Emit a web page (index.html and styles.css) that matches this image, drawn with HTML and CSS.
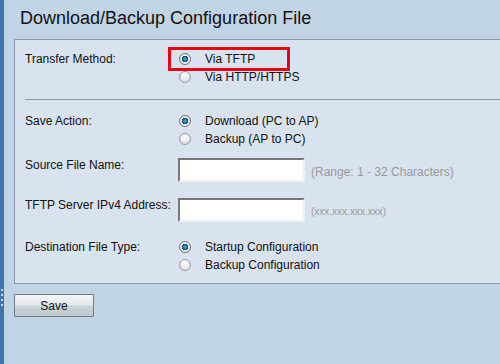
FILE: index.html
```html
<!DOCTYPE html>
<html lang="en">
<head>
    <meta charset="UTF-8">
    <title>Download/Backup Configuration File</title>
    <link rel="stylesheet" href="styles.css">
</head>
<body>
    <div class="frame">
        <div class="sidebar">
            <span class="grip"></span>
            <span class="grip"></span>
            <span class="grip"></span>
            <span class="grip"></span>
        </div>

        <div class="content">
            <h1>Download/Backup Configuration File</h1>

            <div class="panel">
                <div class="row">
                    <div class="label">Transfer Method:</div>
                    <div class="options">
                        <label class="option highlight">
                            <input type="radio" name="method" checked>
                            <span>Via TFTP</span>
                        </label>
                        <label class="option">
                            <input type="radio" name="method">
                            <span>Via HTTP/HTTPS</span>
                        </label>
                    </div>
                </div>

                <hr class="divider">

                <div class="row">
                    <div class="label">Save Action:</div>
                    <div class="options">
                        <label class="option">
                            <input type="radio" name="action" checked>
                            <span>Download (PC to AP)</span>
                        </label>
                        <label class="option">
                            <input type="radio" name="action">
                            <span>Backup (AP to PC)</span>
                        </label>
                    </div>
                </div>

                <div class="row field">
                    <div class="label">Source File Name:</div>
                    <div class="control">
                        <input type="text" class="text-input">
                        <span class="hint">(Range: 1 - 32 Characters)</span>
                    </div>
                </div>

                <div class="row field">
                    <div class="label">TFTP Server IPv4 Address:</div>
                    <div class="control">
                        <input type="text" class="text-input">
                        <span class="hint small">(xxx.xxx.xxx.xxx)</span>
                    </div>
                </div>

                <div class="row">
                    <div class="label">Destination File Type:</div>
                    <div class="options">
                        <label class="option">
                            <input type="radio" name="dest" checked>
                            <span>Startup Configuration</span>
                        </label>
                        <label class="option">
                            <input type="radio" name="dest">
                            <span>Backup Configuration</span>
                        </label>
                    </div>
                </div>
            </div>

            <button class="save-button">Save</button>
        </div>
    </div>
</body>
</html>
```

FILE: styles.css
```css
html, body {
    height: 100%;
}
body {
    margin: 0;
    background-color: #c1d4e6;
    font-family: "Liberation Sans", Arial, sans-serif;
    font-size: 12px;
    color: #111;
    overflow: hidden;
}
.frame {
    display: flex;
    height: 100%;
}
.sidebar {
    width: 4px;
    flex-shrink: 0;
    background-color: #3b74b0;
    display: flex;
    flex-direction: column;
    align-items: center;
    gap: 3px;
    padding-top: 289px;
    box-sizing: border-box;
}
.grip {
    width: 2px;
    height: 2px;
    background-color: #c9d8e8;
}
.content {
    flex: 1;
    padding-left: 10px;
}
h1 {
    margin: 7px 0 10px;
    padding-left: 6px;
    font-size: 18px;
    font-weight: normal;
    line-height: 22px;
    color: #111;
}
.panel {
    background-color: #d8e3ef;
    border: 1px solid #8a9aa9;
    border-right: none;
    padding: 10px 0 9px 10px;
}
.row {
    display: grid;
    grid-template-columns: 153px 1fr;
    line-height: 18px;
}
.options {
    display: flex;
    flex-direction: column;
}
.option {
    display: flex;
    align-items: center;
    height: 18px;
    position: relative;
    width: max-content;
}
.option input {
    appearance: none;
    -webkit-appearance: none;
    width: 12px;
    height: 12px;
    margin: 0 14px 0 1px;
    border-radius: 50%;
    border: 1px solid #9a9fa4;
    background: radial-gradient(circle at 50% 35%, #ffffff 0%, #eceeef 45%, #c8ccd0 100%);
    box-sizing: border-box;
}
.option input:checked {
    border-color: #6d7276;
    background: radial-gradient(circle at 50% 50%, #46b3ee 0%, #1a6fae 30%, #0d3f6a 42%, #f4f5f6 50%, #dfe2e5 80%, #b9bdc1 100%);
}
.highlight::after {
    content: "";
    position: absolute;
    left: -10px;
    right: -35px;
    top: -3px;
    bottom: -3px;
    border: 3px solid #e8000d;
}
.divider {
    border: none;
    border-top: 1px solid #8a9aa9;
    margin: 13px 0 12px;
}
.field {
    margin-top: 8px;
}
.field + .field {
    margin-top: 14px;
}
.field + .row:not(.field) {
    margin-top: 16px;
}
.field .label {
    line-height: 18px;
}
.control {
    display: flex;
    align-items: center;
    margin-top: 2px;
}
.text-input {
    width: 127px;
    height: 24px;
    box-sizing: border-box;
    margin: 0;
    padding: 2px 4px;
    border: 2px solid;
    border-color: #777 #eef1f4 #eef1f4 #777;
    background-color: #fff;
    font: inherit;
}
.hint {
    margin-left: 6px;
    padding-top: 3px;
    color: #999;
}
.hint.small {
    font-size: 10px;
}
.save-button {
    display: block;
    margin-top: 10px;
    width: 80px;
    height: 23px;
    padding: 0;
    border: 1px solid #6e7a84;
    border-radius: 1px;
    background: linear-gradient(#f4f6f8 0%, #e3e8ec 48%, #c9d3da 52%, #bcc7cf 100%);
    font-family: inherit;
    font-size: 12px;
    color: #111;
}
```
